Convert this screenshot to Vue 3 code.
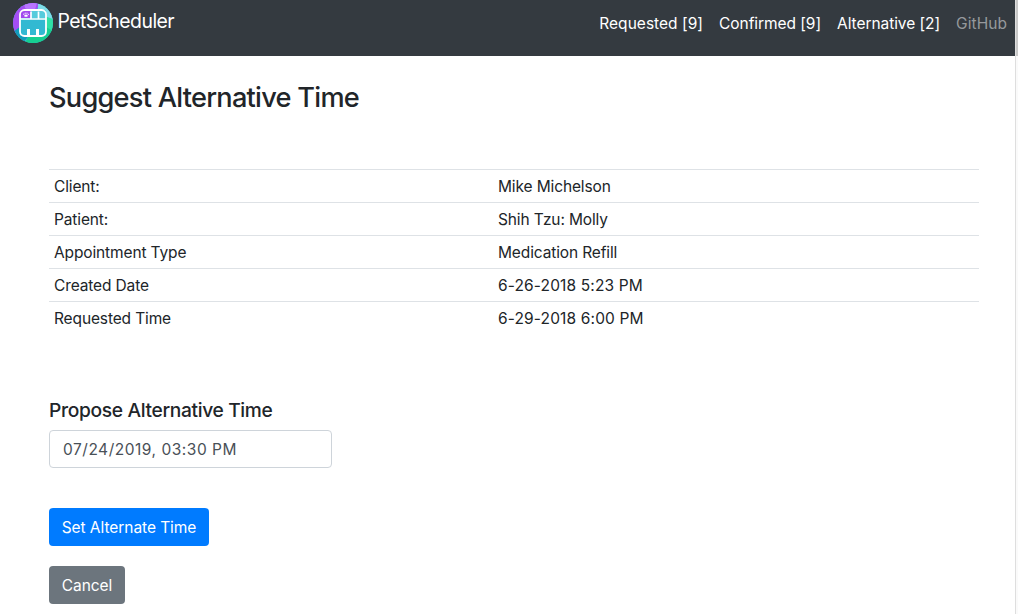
<script setup>
const links = [
  { label: 'Requested [9]', cls: 'requested' },
  { label: 'Confirmed [9]', cls: 'confirmed' },
  { label: 'Alternative [2]', cls: 'alternative' },
  { label: 'GitHub', cls: 'github' },
]
const rows = [
  { key: 'Client:', value: 'Mike Michelson' },
  { key: 'Patient:', value: 'Shih Tzu: Molly' },
  { key: 'Appointment Type', value: 'Medication Refill' },
  { key: 'Created Date', value: '6-26-2018 5:23 PM', date: true },
  { key: 'Requested Time', value: '6-29-2018 6:00 PM', date: true },
]
</script>

<template>
  <div class="window">
    <div class="page">
      <header class="navbar">
        <a class="brand">
          <svg class="logo" width="40" height="40" viewBox="0 0 40 40">
            <defs>
              <clipPath id="disc"><circle cx="20" cy="20" r="20" /></clipPath>
            </defs>
            <g clip-path="url(#disc)">
              <rect width="40" height="40" fill="#35bfd0" />
              <path d="M0 0H27L20 14L7 28L0 34Z" fill="#a44df5" />
              <path d="M11 0H24L21 10L12 5Z" fill="#b875ff" />
              <path d="M25 0H40V17L31 13L25 9Z" fill="#7edce8" />
              <path d="M31 13L40 16V30L31 26Z" fill="#2fe0a5" />
              <path d="M33 24L40 28V40H12L17 30Z" fill="#16cf91" />
              <path d="M0 29L8 23L18 30L10 40H0Z" fill="#129dbb" />
              <path d="M7 15H33V33H7Z" fill="#32b9d2" />
              <path d="M8 7H17V15H8Z" fill="#a149ee" />
              <path d="M18 7H33V15H18Z" fill="#56cbdc" />
            </g>
            <rect x="7" y="7" width="26" height="26" rx="4.5" fill="none" stroke="#fff" stroke-width="1.8" />
            <path d="M7 16H33M18 8.5V16M25.5 8.5V16" fill="none" stroke="#fff" stroke-width="1.7" />
            <path d="M15.5 26V32M24.5 26V32" fill="none" stroke="#fff" stroke-width="3" />
            <path d="M11.2 12.6Q13 10.6 14.8 12.6Q14.8 14.2 13 13.7Q11 14.2 11.2 12.6" fill="#fff" />
            <g fill="#fff"><circle cx="10.8" cy="11.2" r=".6" /><circle cx="12.2" cy="10.2" r=".6" /><circle cx="14" cy="10.2" r=".6" /><circle cx="15.3" cy="11.3" r=".6" /></g>
          </svg>
          <span class="brand-name">PetScheduler</span>
        </a>
        <nav class="links">
          <a v-for="l in links" :key="l.label" :class="l.cls">{{ l.label }}</a>
        </nav>
      </header>
      <main class="content">
        <h1>Suggest Alternative Time</h1>
        <table>
          <tbody>
            <tr v-for="r in rows" :key="r.key">
              <td class="key">{{ r.key }}</td>
              <td :class="{ date: r.date }">{{ r.value }}</td>
            </tr>
          </tbody>
        </table>
        <h2>Propose Alternative Time</h2>
        <div class="field"><span>07/24/2019, 03:30 PM</span></div>
        <button class="btn primary">Set Alternate Time</button>
        <button class="btn secondary">Cancel</button>
      </main>
    </div>
    <div class="gutter"></div>
  </div>
</template>

<style>
body { background: #fff; overflow: hidden; }
</style>

<style scoped>
* { box-sizing: border-box; }
.window {
  display: flex;
  height: 614px;
  overflow: hidden;
  font-family: Inter, "Liberation Sans", sans-serif;
  font-size: 15.5px;
  line-height: 24px;
  letter-spacing: -0.13px;
  color: #212529;
}
.page { width: 1015px; }
.gutter {
  width: 3px;
  border-left: 1px solid #dedede;
  background: linear-gradient(#c9c9c9 56px, #fafafa 56px);
}
.navbar {
  display: flex;
  justify-content: space-between;
  height: 56px;
  padding: 3px 8px 0 13px;
  background: #343a40;
  color: #fff;
}
.brand { display: flex; }
.logo { display: block; }
.brand-name { margin: 3px 0 0 4.5px; font-size: 19.4px; line-height: 30px; letter-spacing: -0.52px; }
.links { display: flex; gap: 16px; margin-top: 9px; letter-spacing: -0.06px; }
.requested { letter-spacing: 0.03px; }
.github { color: #96999c; letter-spacing: 0.06px; }
.content { padding: 25px 36px 0 49px; }
h1 { margin: 0; font-size: 27.2px; line-height: 34px; font-weight: 500; letter-spacing: -0.75px; }
table { width: 930px; margin-top: 54px; border-collapse: collapse; table-layout: fixed; }
td { height: 33px; padding: 5px 5px 3px; border-top: 1px solid #dee2e6; }
.key { width: 444px; }
.date { letter-spacing: 0.14px; }
h2 { margin: 63px 0 0; font-size: 19.2px; line-height: 24px; font-weight: 500; letter-spacing: -0.34px; }
.field {
  width: 283px;
  height: 38px;
  margin-top: 8px;
  padding: 7px 13px 5px;
  border: 1px solid #ced4da;
  border-radius: 4px;
  color: #495057;
  letter-spacing: 0.52px;
}
.btn {
  display: block;
  height: 38px;
  padding: 3px 0 0;
  border: 0;
  border-radius: 4px;
  color: #fff;
  font: inherit;
  letter-spacing: -0.06px;
}
.primary { width: 160px; margin-top: 40px; background: #007bff; }
.secondary { width: 76px; margin-top: 20px; background: #6c757d; }
</style>
